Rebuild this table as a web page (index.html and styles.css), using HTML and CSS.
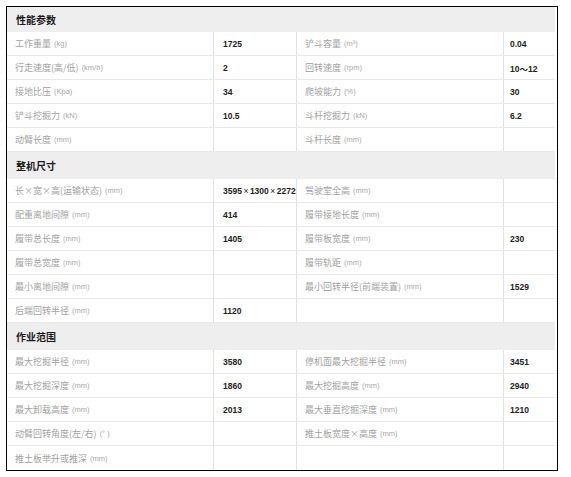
FILE: index.html
```html
<!DOCTYPE html>
<html lang="zh-CN">
<head>
<meta charset="utf-8">
<title>参数</title>
<link rel="stylesheet" href="styles.css">
</head>
<body>
<div class="sheet">
  <div class="sec s1">性能参数</div>
  <div class="row"><div class="k">工作重量<span class="u">(kg)</span></div><div class="v">1725</div><div class="k">铲斗容量<span class="u">(m³)</span></div><div class="v">0.04</div></div>
  <div class="row"><div class="k">行走速度(高/低)<span class="u">(km/h)</span></div><div class="v">2</div><div class="k">回转速度<span class="u">(rpm)</span></div><div class="v">10～12</div></div>
  <div class="row"><div class="k">接地比压<span class="u">(Kpa)</span></div><div class="v">34</div><div class="k">爬坡能力<span class="u">(%)</span></div><div class="v">30</div></div>
  <div class="row"><div class="k">铲斗挖掘力<span class="u">(kN)</span></div><div class="v">10.5</div><div class="k">斗杆挖掘力<span class="u">(kN)</span></div><div class="v">6.2</div></div>
  <div class="row"><div class="k">动臂长度<span class="u">(mm)</span></div><div class="v"></div><div class="k">斗杆长度<span class="u">(mm)</span></div><div class="v"></div></div>
  <div class="sec">整机尺寸</div>
  <div class="row"><div class="k">长×宽×高(运输状态)<span class="u">(mm)</span></div><div class="v">3595<span class="x">×</span>1300<span class="x">×</span>2272</div><div class="k">驾驶室全高<span class="u">(mm)</span></div><div class="v"></div></div>
  <div class="row"><div class="k">配重离地间隙<span class="u">(mm)</span></div><div class="v">414</div><div class="k">履带接地长度<span class="u">(mm)</span></div><div class="v"></div></div>
  <div class="row"><div class="k">履带总长度<span class="u">(mm)</span></div><div class="v">1405</div><div class="k">履带板宽度<span class="u">(mm)</span></div><div class="v">230</div></div>
  <div class="row"><div class="k">履带总宽度<span class="u">(mm)</span></div><div class="v"></div><div class="k">履带轨距<span class="u">(mm)</span></div><div class="v"></div></div>
  <div class="row"><div class="k">最小离地间隙<span class="u">(mm)</span></div><div class="v"></div><div class="k">最小回转半径(前端装置)<span class="u">(mm)</span></div><div class="v">1529</div></div>
  <div class="row"><div class="k">后端回转半径<span class="u">(mm)</span></div><div class="v">1120</div><div class="k"></div><div class="v"></div></div>
  <div class="sec">作业范围</div>
  <div class="row"><div class="k">最大挖掘半径<span class="u">(mm)</span></div><div class="v">3580</div><div class="k">停机面最大挖掘半径<span class="u">(mm)</span></div><div class="v">3451</div></div>
  <div class="row"><div class="k">最大挖掘深度<span class="u">(mm)</span></div><div class="v">1860</div><div class="k">最大挖掘高度<span class="u">(mm)</span></div><div class="v">2940</div></div>
  <div class="row"><div class="k">最大卸载高度<span class="u">(mm)</span></div><div class="v">2013</div><div class="k">最大垂直挖掘深度<span class="u">(mm)</span></div><div class="v">1210</div></div>
  <div class="row"><div class="k">动臂回转角度(左/右)<span class="u">(° )</span></div><div class="v"></div><div class="k">推土板宽度×高度<span class="u">(mm)</span></div><div class="v"></div></div>
  <div class="row last"><div class="k">推土板举升或推深<span class="u">(mm)</span></div><div class="v"></div><div class="k"></div><div class="v"></div></div>
</div>
</body>
</html>
```

FILE: styles.css
```css
* { box-sizing: border-box; }
html, body { margin: 0; padding: 0; background: #fff; }
body {
  font-family: "Noto Sans CJK SC", "Liberation Sans", sans-serif;
}
.sheet {
  margin: 6px 0 0 6px;
  width: 552px;
  border: 1px solid #000;
  padding-right: 2px;
  background: #fff;
}
.sec {
  height: 27px;
  background: #eeeeee;
  display: flex;
  align-items: center;
  padding-left: 9px;
  font-size: 10px;
  font-weight: 700;
  color: #1a1a1a;
}
.sec.s1 { height: 25px; }
.row {
  display: grid;
  grid-template-columns: 207px 83px 207px 51px;
  height: 24px;
  border-bottom: 1px solid #e9e9e9;
}
.row.last { border-bottom: 0; }
.row > div {
  display: flex;
  align-items: center;
  white-space: nowrap;
  overflow: visible;
}
.row > div:nth-child(-n+3) { border-right: 1px solid #dde2ea; }
.k {
  padding-left: 8px;
  font-size: 9px;
  color: #a2a2a2;
}
.u {
  font-family: "Liberation Sans", sans-serif;
  font-size: 7.5px;
  margin-left: 3px;
  color: #a8a8a8;
}
.v {
  font-family: "Liberation Sans", "Noto Sans CJK SC", sans-serif;
  font-size: 8.5px;
  font-weight: 700;
  color: #222;
  position: relative;
  z-index: 1;
}
.x { margin: 0 1.5px; font-weight: 400; }
.row > div:nth-child(2) { padding-left: 9px; }
.row > div:nth-child(4) { padding-left: 6px; }
```
